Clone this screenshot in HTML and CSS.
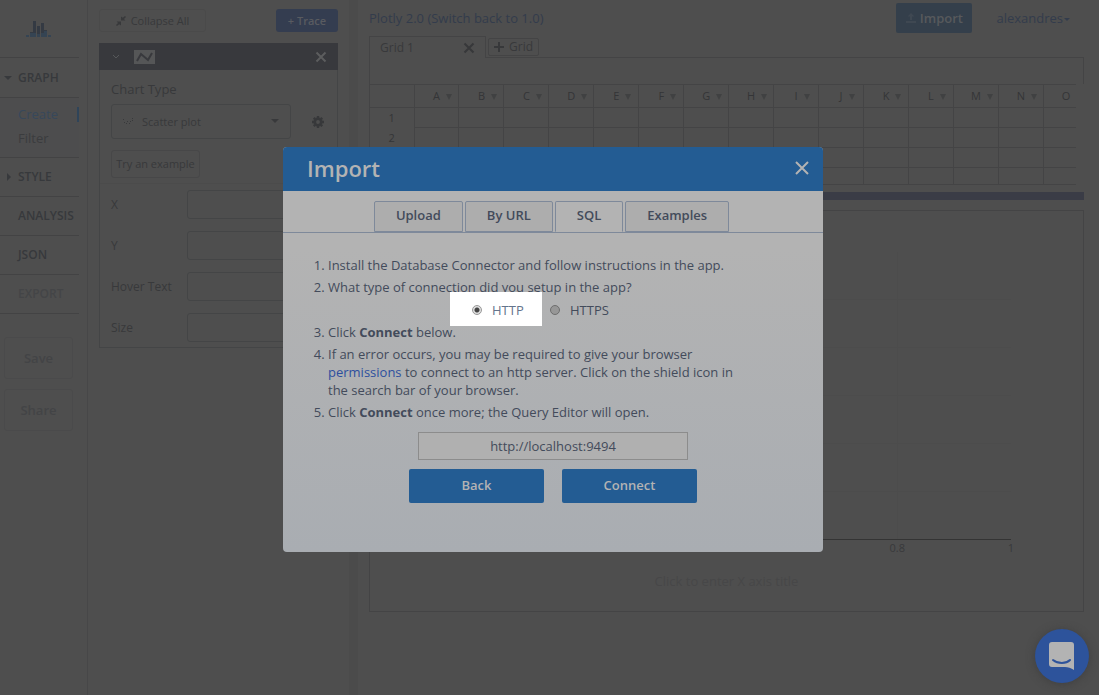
FILE: index.html
```html
<!DOCTYPE html>
<html lang="en">
<head>
<meta charset="utf-8">
<title>Plotly workspace</title>
<link rel="stylesheet" href="styles.css">
</head>
<body>
<div class="app">
  <nav class="sidebar">
    <div class="logo">
      <svg width="26" height="16" viewBox="0 0 26 16">
        <path class="bar-low" d="M0 14h3v2H0zM4 12h3v4H4zM7 12h3v4H7zM11 13h3v3h-3zM15 12h3v4h-3zM18 10h3v6h-3zM22 14h3v2h-3z"/>
        <path class="bar-high" d="M4 11h3v1H4zM7 0h3v12H7zM11 5h3v8h-3zM15 2h3v10h-3zM18 9h3v1h-3z"/>
      </svg>
    </div>
    <a class="nav-head" href="#"><span class="tri tri-down"></span>GRAPH</a>
    <div class="nav-sub">
      <a class="sub-link active" href="#">Create</a>
      <a class="sub-link" href="#">Filter</a>
    </div>
    <a class="nav-head" href="#"><span class="tri tri-right"></span>STYLE</a>
    <a class="nav-head" href="#">ANALYSIS</a>
    <a class="nav-head" href="#">JSON</a>
    <a class="nav-head muted" href="#">EXPORT</a>
    <div class="nav-actions">
      <button class="side-btn">Save</button>
      <button class="side-btn">Share</button>
    </div>
  </nav>

  <section class="traces">
    <div class="trace-bar">
      <button class="collapse"><svg width="10" height="10" viewBox="0 0 10 10"><path d="M0 9l2-2-1.300-1.500H5V9.500L3.200 8.200 1 10zM10 1L8 3l1.300 1.500H5V.500L6.800 1.800 9 0z"/></svg>Collapse All</button>
      <button class="add-trace">+ Trace</button>
    </div>
    <div class="trace-card">
      <header class="trace-head">
        <svg class="chev" width="8" height="6" viewBox="0 0 8 6"><path d="M1 1l3 3 3-3"/></svg>
        <svg class="thumb" width="21" height="14" viewBox="0 0 21 14"><path class="thumb-bg" d="M0 0h21v14H0z"/><path class="thumb-line" d="M3 11l4-7 7 6 4-7"/></svg>
        <button class="trace-close" aria-label="Remove trace"><svg width="12" height="12" viewBox="0 0 12 12"><path d="M1.500 1.500l9 9M10.500 1.500l-9 9"/></svg></button>
      </header>
      <div class="trace-body">
        <label class="type-label" for="chart-type">Chart Type</label>
        <div class="type-row">
          <div class="select-wrap">
            <svg class="dots" width="12" height="8" viewBox="0 0 12 8"><path d="M1 1h1v1H1zM2 4h1v1H2zM4 5h1v1H4zM5 3h1v1H5zM7 5h1v1H7zM8 3h1v1H8zM10 2h1v1h-1zM10 0h1v1h-1z"/></svg>
            <select id="chart-type"><option>Scatter plot</option></select>
            <span class="tri tri-down select-arrow"></span>
          </div>
          <button class="gear" aria-label="Settings"><svg width="12" height="12" viewBox="0 0 12 12"><circle cx="6" cy="6" r="3.200" fill="none" stroke-width="2.600"/><path stroke-width="2.400" d="M6 0v2M6 10v2M0 6h2M10 6h2M1.800 1.800l1.300 1.300M8.900 8.900l1.300 1.300M1.800 10.200l1.300-1.300M8.900 3.100l1.300-1.300"/></svg></button>
        </div>
        <button class="example">Try an example</button>
        <div class="fields">
          <div class="field"><label for="fx">X</label><input id="fx" type="text"></div>
          <div class="field"><label for="fy">Y</label><input id="fy" type="text"></div>
          <div class="field"><label for="fh">Hover Text</label><input id="fh" type="text"></div>
          <div class="field"><label for="fs">Size</label><input id="fs" type="text"></div>
        </div>
      </div>
    </div>
  </section>

  <div class="splitter"></div>

  <main class="workspace">
    <header class="topbar">
      <a class="switch" href="#">Plotly 2.0 (Switch back to 1.0)</a>
      <button class="import-btn"><svg width="10" height="10" viewBox="0 0 10 10"><path d="M5 0l3.500 3.500H6V7H4V3.500H1.500zM0 8h10v2H0z"/></svg>Import</button>
      <a class="user" href="#">alexandres<span class="tri tri-down"></span></a>
    </header>
    <div class="tabs">
      <div class="tab">Grid 1<button class="tab-close" aria-label="Close grid"><svg width="12" height="12" viewBox="0 0 12 12"><path d="M1.500 1.500l9 9M10.500 1.500l-9 9"/></svg></button></div>
      <div class="tab-rest"><button class="tab-add"><svg width="10" height="10" viewBox="0 0 10 10"><path d="M5 0v10M0 5h10"/></svg>Grid</button></div>
    </div>
    <div class="toolbar"></div>
    <div class="sheet">
      <table>
        <thead><tr><th class="corner"></th><th>A<i></i></th><th>B<i></i></th><th>C<i></i></th><th>D<i></i></th><th>E<i></i></th><th>F<i></i></th><th>G<i></i></th><th>H<i></i></th><th>I<i></i></th><th>J<i></i></th><th>K<i></i></th><th>L<i></i></th><th>M<i></i></th><th>N<i></i></th><th>O<i></i></th></tr></thead>
        <tbody>
          <tr><th>1</th><td></td><td></td><td></td><td></td><td></td><td></td><td></td><td></td><td></td><td></td><td></td><td></td><td></td><td></td><td></td></tr>
          <tr><th>2</th><td></td><td></td><td></td><td></td><td></td><td></td><td></td><td></td><td></td><td></td><td></td><td></td><td></td><td></td><td></td></tr>
          <tr><th></th><td></td><td></td><td></td><td></td><td></td><td></td><td></td><td></td><td></td><td></td><td></td><td></td><td></td><td></td><td></td></tr>
          <tr class="last"><th></th><td></td><td></td><td></td><td></td><td></td><td></td><td></td><td></td><td></td><td></td><td></td><td></td><td></td><td></td><td></td></tr>
        </tbody>
      </table>
    </div>
    <div class="drag-bar"></div>
    <section class="plot">
      <div class="plot-area"></div>
      <div class="ticks"><span class="tick-4">0.8</span><span class="tick-5">1</span></div>
      <p class="axis-title">Click to enter X axis title</p>
    </section>
  </main>
</div>

<div class="overlay">
  <div class="modal" role="dialog" aria-labelledby="modal-title">
    <header class="modal-head">
      <h1 id="modal-title">Import</h1>
      <button class="modal-close" aria-label="Close"><svg width="14" height="14" viewBox="0 0 14 14"><path d="M1 1l12 12M13 1L1 13"/></svg></button>
    </header>
    <div class="modal-tabs">
      <button>Upload</button>
      <button>By URL</button>
      <button class="current">SQL</button>
      <button>Examples</button>
    </div>
    <div class="modal-body">
      <ol class="steps">
        <li>Install the Database Connector and follow instructions in the app.</li>
        <li>What type of connection did you setup in the app?
          <div class="choices">
            <label class="choice spotlight"><input type="radio" name="proto" checked>HTTP</label>
            <label class="choice"><input type="radio" name="proto">HTTPS</label>
          </div>
        </li>
        <li>Click <b>Connect</b> below.</li>
        <li>If an error occurs, you may be required to give your browser <a href="#">permissions</a> to connect to an http server. Click on the shield icon in the search bar of your browser.</li>
        <li>Click <b>Connect</b> once more; the Query Editor will open.</li>
      </ol>
      <input class="address" type="text" aria-label="Connector address" value="http://localhost:9494">
      <div class="actions">
        <button>Back</button>
        <button>Connect</button>
      </div>
    </div>
  </div>
</div>

<button class="chat" aria-label="Open chat">
  <svg width="26" height="30" viewBox="0 0 26 30"><path class="bubble" d="M3 1h19a3 3 0 0 1 3 3v25c-3-2-6-3-9-3H3a3 3 0 0 1-3-3V4a3 3 0 0 1 3-3z"/><path class="smile" d="M4 19c5 4 13 4 17 0"/></svg>
</button>
</body>
</html>
```

FILE: styles.css
```css
* { box-sizing: border-box; }

body {
  margin: 0;
  background: #4e4e4e;
  color: #38393b;
  font: 12px/18px "Open Sans", "Noto Sans", sans-serif;
}

button, input, select { font: inherit; color: inherit; margin: 0; }
button { background: none; border: 0; padding: 0; }
a { color: inherit; text-decoration: none; }
svg { display: block; }

.app {
  display: grid;
  grid-template-columns: 88px 261px 9px 1fr;
  min-height: 100vh;
  overflow: hidden;
}

.tri { display: inline-block; border: 4px solid transparent; }
.tri-down { border-top-color: currentColor; border-bottom: 0; }
.tri-right { border-left-color: currentColor; border-right: 0; }

/* Sidebar */
.sidebar { border-right: 1px solid #474748; padding-right: 8px; }
.logo { height: 58px; border-bottom: 1px solid #434344; padding: 21px 0 0 26px; }
.bar-low { fill: #354453; }
.bar-high { fill: #343a43; }
.nav-head {
  display: flex;
  align-items: center;
  height: 40px;
  padding-left: 18px;
  position: relative;
  border-bottom: 1px solid #434344;
  color: #37393c;
  font-weight: 600;
}
.nav-sub ~ .nav-head { height: 39px; }
.nav-head .tri { position: absolute; left: 4px; }
.nav-head .tri-right { left: 7px; }
.nav-head.muted { color: #444547; }
.nav-sub { padding: 4px 0 7px; border-bottom: 1px solid #434344; background: #4d4d4e; font-size: 13px; }
.sub-link { display: block; line-height: 24px; padding-left: 18px; color: #3b3c3e; }
.sub-link.active {
  color: #37485b;
  background: linear-gradient(#2f4459, #2f4459) right center / 2px 15px no-repeat;
}
.nav-actions { display: flex; flex-direction: column; gap: 10px; padding: 23px 6px 0 4px; }
.side-btn { height: 42px; border: 1px solid #4a4a4b; border-radius: 3px; color: #434446; font-size: 13px; font-weight: 600; }

/* Trace panel */
.traces { padding: 9px 11px 0; }
.trace-bar { display: flex; justify-content: space-between; }
.collapse { display: flex; align-items: center; justify-content: center; gap: 5px; width: 107px; height: 23px; border: 1px solid #4a4a4a; border-radius: 3px; font-size: 11px; }
.collapse svg { fill: #38393b; }
.add-trace { width: 62px; height: 23px; background: #343d50; border-radius: 3px; color: #595b60; font-size: 11px; font-weight: 600; }
.trace-card { margin-top: 11px; border: 1px solid #444546; border-top: 0; }
.trace-head { display: flex; align-items: center; height: 27px; margin: 0 -1px; padding: 0 11px 0 13px; background: #38393d; }
.chev { fill: none; stroke: #56585a; stroke-width: 1; }
.thumb { margin-left: 14px; }
.thumb-bg { fill: #555657; }
.thumb-line { fill: none; stroke: #38393d; stroke-width: 2; }
.trace-close { margin-left: auto; }
.trace-close svg { fill: none; stroke: #5c5d5e; stroke-width: 2; }
.trace-body { padding: 10px 0 5px 11px; }
.type-label { display: block; font-size: 13px; }
.type-row { display: flex; align-items: center; gap: 21px; margin-top: 6px; }
.select-wrap { position: relative; width: 180px; }
.select-wrap select { appearance: none; width: 100%; height: 35px; padding: 0 0 0 30px; border: 1px solid #444546; border-radius: 3px; background: transparent; font-size: 11px; }
.dots { position: absolute; left: 11px; top: 14px; fill: #38393b; }
.select-arrow { position: absolute; right: 12px; top: 15px; }
.gear svg { stroke: #37383a; fill: none; }
.example { display: block; width: 89px; height: 28px; margin-top: 11px; border: 1px solid #474748; border-radius: 3px; font-size: 11px; }
.fields { margin: 5px 0 0 -11px; padding: 6px 0 0 11px; border-top: 1px solid #4b4b4b; display: grid; gap: 12px; }
.field { display: grid; grid-template-columns: 76px 1fr; align-items: center; }
.field input { height: 29px; min-width: 0; margin-right: 11px; border: 1px solid #444546; border-radius: 3px; background: transparent; }

.splitter { background: #4b4b4b; }

/* Workspace */
.workspace { min-width: 0; padding: 3px 15px 20px 11px; }
.topbar { display: flex; align-items: center; height: 30px; color: #333c4c; font-size: 13px; }
.import-btn { display: flex; align-items: center; justify-content: center; gap: 4px; width: 76px; height: 30px; margin-left: auto; background: #343f4b; border-radius: 2px; color: #57595c; font-weight: 600; }
.import-btn svg { fill: #3f4852; }
.user { margin: 0 14px 0 24px; }
.user .tri { border-width: 3px; border-bottom: 0; margin-left: 1px; vertical-align: middle; }
.tabs { display: flex; margin-top: 3px; }
.tab { display: flex; align-items: center; justify-content: space-between; width: 117px; height: 22px; padding: 0 10px; border: 1px solid #444445; border-bottom: 0; }
.tab-close svg { fill: none; stroke: #37383a; stroke-width: 2; }
.tab-rest { flex: 1; padding: 2px 0 0 2px; border-bottom: 1px solid #444445; }
.tab-add { display: flex; align-items: center; justify-content: center; gap: 5px; width: 51px; height: 18px; border: 1px solid #444445; border-radius: 2px; }
.tab-add svg { fill: none; stroke: #37383a; stroke-width: 2; }
.toolbar { height: 26px; border: solid #444445; border-width: 0 1px; }
.sheet { height: 108px; margin-right: 8px; overflow: hidden; border-left: 1px solid #444445; }
.sheet table { table-layout: fixed; width: 719px; border-collapse: collapse; font-size: 11px; line-height: 16px; color: #343537; }
.sheet th, .sheet td { height: 20px; padding: 0; border: 1px solid #444445; font-weight: 400; }
.sheet thead th { height: 23px; padding-left: 12px; }
.sheet thead .corner { width: 44px; padding: 0; }
.sheet thead i { display: inline-block; margin-left: 6px; border: 3px solid transparent; border-top: 6px solid #404142; border-bottom: 0; }
.sheet tr > :first-child { border-left: 0; }
.sheet tbody th { border-top: 0; border-bottom: 0; }
.sheet .last th, .sheet .last td { height: 17px; }
.drag-bar { height: 8px; background: #3a3c46; }
.plot { margin-top: 10px; height: 402px; padding: 41px 72px 0; border: 1px solid #444445; }
.plot-area {
  height: 288px;
  border-bottom: 1px solid #343434;
  background: repeating-linear-gradient(to top, transparent 0 47px, #4c4c4c 47px 48px), repeating-linear-gradient(to right, transparent 0 113px, #4c4c4c 113px 114px);
}
.ticks { display: grid; grid-template-columns: repeat(6, 1fr); margin: 0 -10%; line-height: 16px; font-size: 11px; text-align: center; }
.tick-4 { grid-column: 5; }
.tick-5 { grid-column: 6; }
.axis-title { margin: 16px 0 0; text-align: center; font-size: 13px; color: #474748; }

/* Import dialog */
.overlay { position: fixed; inset: 0; display: flex; justify-content: center; align-items: flex-start; padding: 147px 0 0 7px; }
.modal { width: 540px; border-radius: 4px; overflow: hidden; background: linear-gradient(#b3b3b3 25%, #a9adb2); color: #434b5b; font-size: 13px; }
.modal-head { display: flex; align-items: center; justify-content: space-between; height: 44px; padding: 0 14px 3px 24px; background: #235c93; color: #b3b3b3; }
.modal-head h1 { margin: 0; font-size: 22px; line-height: 30px; font-weight: 600; }
.modal-close svg { fill: none; stroke: #b3b3b3; stroke-width: 2; }
.modal-tabs { display: flex; justify-content: center; gap: 2px; padding: 10px 3px 0 0; border-bottom: 1px solid #7e899a; }
.modal-tabs button { height: 31px; padding: 0 21px 3px; border: 1px solid #7e899a; border-radius: 2px 2px 0 0; background: #adadad; font-weight: 600; }
.modal-tabs .current { border-bottom-color: transparent; background: #b3b3b3; }
.modal-body { padding: 23px 32px 49px; }
.steps { display: grid; gap: 4px; margin: 0 48px 0 0; padding-left: 13px; }
.choices { display: flex; margin: -4px 0 -7px 122px; }
.choice { display: flex; align-items: center; gap: 10px; height: 34px; padding: 2px 8px 0; }
.choice input { appearance: none; width: 10px; height: 10px; border: 1px solid #6e6e6e; border-radius: 50%; background: #979797; }
.spotlight { width: 92px; padding-left: 22px; background: #fff; color: #64748c; }
.spotlight input { border-color: #999; background: radial-gradient(#444 0 2px, #dedede 3px); }
.steps a { color: #2d4f9e; }
.address { display: block; width: 270px; height: 28px; margin: 11px auto 0; padding: 0; border: 1px solid #8c8c8c; background: #b0b0b0; text-align: center; }
.actions { display: flex; justify-content: center; gap: 18px; margin-top: 9px; }
.actions button { width: 135px; height: 34px; padding-bottom: 2px; border-radius: 2px; background: #235c93; color: #b3b3b3; font-weight: 600; }

/* Chat launcher */
.chat { position: fixed; right: 10px; bottom: 12px; width: 54px; height: 54px; display: grid; place-items: center; border-radius: 50%; background: #2d539b; box-shadow: 0 1px 8px #3f3f3f; }
.bubble { fill: #b3b3b3; }
.smile { fill: none; stroke: #2d539b; stroke-width: 2; stroke-linecap: round; }
```
